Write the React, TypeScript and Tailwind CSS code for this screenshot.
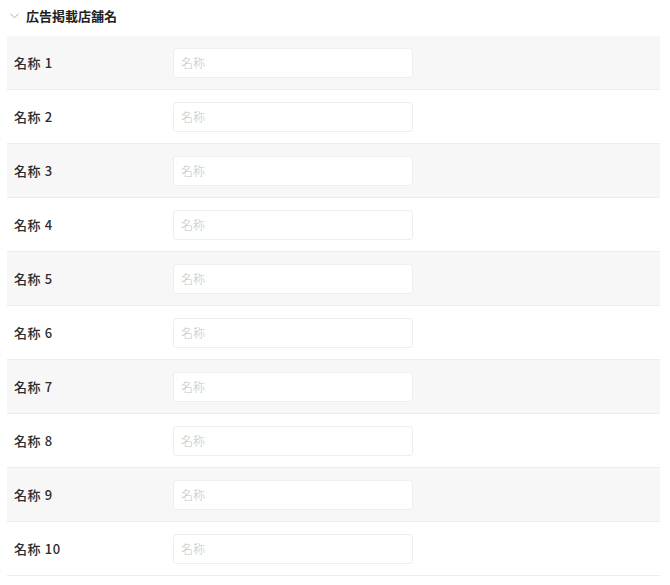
import React from "react";

const ROWS = Array.from({ length: 10 }, (_, i) => i + 1);

export default function App() {
  return (
    <div className="min-h-[585px] bg-white pl-[7px] pr-[10px] pt-[5px] font-['Noto_Sans_CJK_JP','Noto_Sans',sans-serif] text-[#333]">
      {/* Section header */}
      <div className="flex h-[20px] items-center gap-[7px] pl-[3px]">
        <svg width="9" height="6" viewBox="0 0 9 6" fill="none" className="mt-[1px]">
          <path d="M0.5 0.8 L4.5 4.8 L8.5 0.8" stroke="#aaa" strokeWidth="1" />
        </svg>
        <h2 className="text-[13px] font-bold leading-none text-[#222]">広告掲載店舗名</h2>
      </div>

      <div className="mt-[11px]">
        {ROWS.map((n) => (
          <div
            key={n}
            className={`flex h-[54px] items-center border-b border-[#ececec] ${
              n % 2 === 1 ? "bg-[#f7f7f7]" : "bg-white"
            }`}
          >
            <div className="w-[166px] pl-[7px] text-[13px] font-medium tracking-[0.6px] text-[#2c2c2c]">
              名称 {n}
            </div>
            <input
              placeholder="名称"
              className="h-[30px] w-[240px] rounded-[3px] border border-[#eeeeee] bg-white px-[7px] text-[12px] font-light outline-none placeholder:text-[#c4c4c4]"
            />
          </div>
        ))}
      </div>
    </div>
  );
}
